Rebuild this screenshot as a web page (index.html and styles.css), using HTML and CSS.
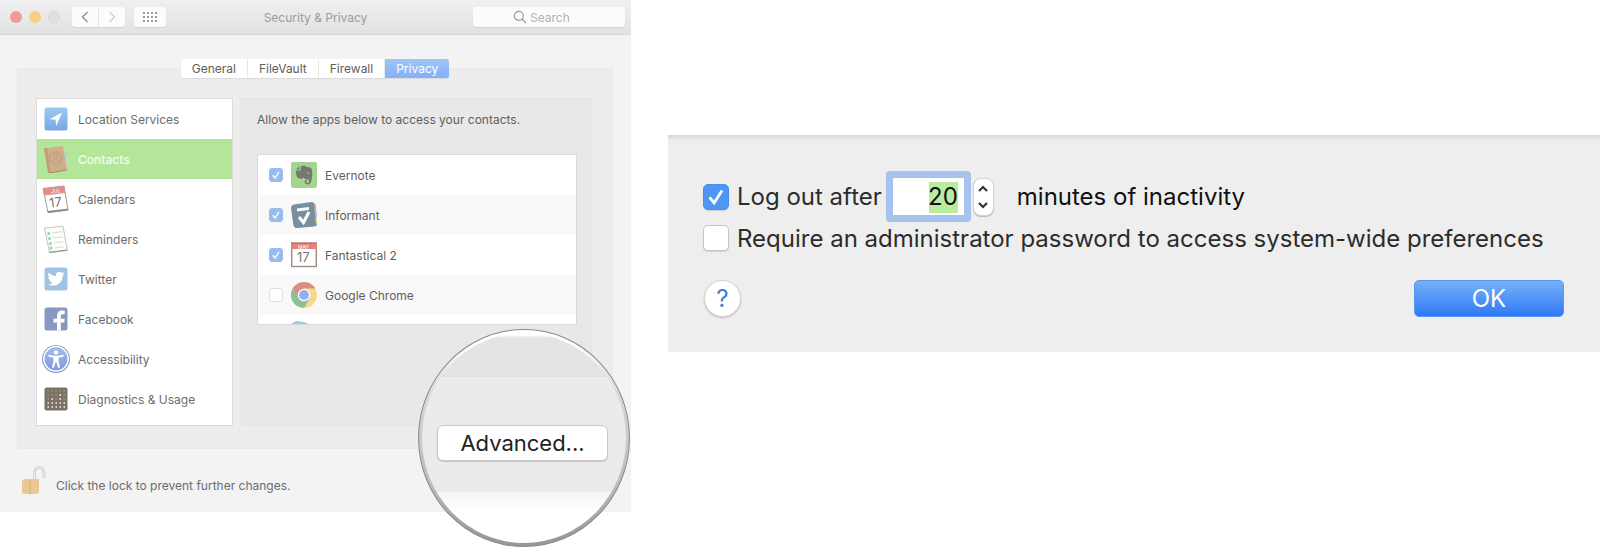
FILE: index.html
```html
<!DOCTYPE html>
<html lang="en">
<head>
<meta charset="utf-8">
<title>Security &amp; Privacy</title>
<link rel="stylesheet" href="styles.css">
</head>
<body>
<main class="stage">
  <section class="window" aria-label="Security &amp; Privacy">
    <header class="titlebar">
      <div class="lights"><span class="light red"></span><span class="light amber"></span><span class="light off"></span></div>
      <div class="nav">
        <button class="tool back" aria-label="Back"><svg width="8" height="12" viewBox="0 0 8 12"><path d="M6.500 1 1.500 6l5 5" fill="none" stroke="#8c8c8c" stroke-width="1.400"/></svg></button>
        <button class="tool forward" aria-label="Forward"><svg width="8" height="12" viewBox="0 0 8 12"><path d="M1.500 1l5 5-5 5" fill="none" stroke="#d0d0d0" stroke-width="1.400"/></svg></button>
      </div>
      <button class="tool all" aria-label="Show all"><svg width="16" height="12" viewBox="0 0 16 12"><path d="M1 2h14M1 6h14M1 10h14" stroke="#999" stroke-width="2" stroke-dasharray="2 2"/></svg></button>
      <h1 class="title">Security &amp; Privacy</h1>
      <label class="search">
        <svg width="14" height="14" viewBox="0 0 14 14" fill="none" stroke="#999" stroke-width="1.200"><circle cx="5.800" cy="5.800" r="4.500"/><path d="M9 9l4 4"/></svg>
        <input class="search-input" type="search" placeholder="Search" aria-label="Search">
      </label>
    </header>

    <div class="body">
      <nav class="tabs" aria-label="Sections">
        <button class="tab">General</button><button class="tab">FileVault</button><button class="tab">Firewall</button><button class="tab active">Privacy</button>
      </nav>
      <div class="group">
        <ul class="services">
          <li><button class="service">
            <svg class="icon" viewBox="0 0 28 28"><defs><linearGradient id="loc" x2="0" y2="1"><stop stop-color="#9cc9ef"/><stop offset="1" stop-color="#7ba8e4"/></linearGradient></defs><rect x="2.500" y="2.500" width="23" height="23" rx="2.500" fill="url(#loc)"/><path d="M20 7.500 7.500 14.300l6 .500.700 6.200z" fill="#fff"/></svg>
            Location Services</button></li>
          <li><button class="service selected">
            <svg class="icon" viewBox="0 0 28 28"><path d="M2 3.500 21 1l4 24-18 3z" fill="#cdaf8b"/><path d="M2 3.500 5 2.800 9 27.500l-3 .5z" fill="#c29e78"/><path d="M22 8l3-.5.7 4-3 .5z" fill="#a9cfe5"/><path d="M23 14l3-.5.6 4-3 .5z" fill="#c2d6b1"/><path d="M7 28l18-3" stroke="#a58767" stroke-width="1.200"/><g fill="none" stroke="#c19c76"><circle cx="13.500" cy="13" r="6"/><circle cx="13.500" cy="11" r="2"/><path d="M9.500 17q4-5 8-.5"/></g></svg>
            Contacts</button></li>
          <li><button class="service">
            <svg class="icon" viewBox="0 0 28 28"><path d="M1 3.500 22 1l4 24-20 2.500z" fill="#fff" stroke="#9b9b9b"/><path d="M1 3.500 22 1l1.300 7L2.300 10.500z" fill="#e58d86"/><path d="M5.500 26 26 23.500l.3 2L6 28z" fill="#8e8e8e"/><text class="tiny" x="9" y="8" transform="rotate(-7 12 6)">JUL</text><text class="date" x="7" y="22" transform="rotate(-7 13 17)">17</text></svg>
            Calendars</button></li>
          <li><button class="service">
            <svg class="icon" viewBox="0 0 28 28"><path d="M2.500 3 21 1.200l4.300 24L7.500 27.500z" fill="#fcfcfa" stroke="#c5c5c5"/><path d="M7.500 27.500l17.800-2.300" stroke="#999" stroke-width="1.300"/><g stroke="#dcdcdc"><path d="M10 8l10-1.200M10.800 13l10-1.200M11.600 18l10-1.200M12.400 23l9-1"/></g><g fill="#9cd3ac"><circle cx="6.700" cy="8.500" r="1.500"/><circle cx="7.500" cy="13.500" r="1.500"/><circle cx="8.300" cy="18.500" r="1.500"/><circle cx="9" cy="23" r="1.500"/></g></svg>
            Reminders</button></li>
          <li><button class="service">
            <svg class="icon" viewBox="0 0 28 28"><rect x="2.500" y="2.500" width="23" height="23" rx="2.500" fill="#9fc3e4"/><path transform="translate(5.500 5.200) scale(.71)" d="M23.950 4.570a10 10 0 0 1-2.820.770 4.950 4.950 0 0 0 2.160-2.720c-.950.550-2 .960-3.120 1.180a4.920 4.920 0 0 0-8.380 4.480C7.690 8.100 4.070 6.130 1.640 3.160a4.920 4.920 0 0 0 1.520 6.570 4.900 4.900 0 0 1-2.230-.610v.060a4.920 4.920 0 0 0 3.950 4.830 5 5 0 0 1-2.210.080 4.940 4.940 0 0 0 4.600 3.420A9.870 9.870 0 0 1 0 19.540a14 14 0 0 0 7.550 2.210c9.050 0 14-7.500 14-13.980l-.020-.630a9.940 9.940 0 0 0 2.420-2.570z" fill="#fff"/></svg>
            Twitter</button></li>
          <li><button class="service">
            <svg class="icon" viewBox="0 0 28 28"><rect x="2.500" y="2.500" width="23" height="23" rx="2.500" fill="#8998c3"/><path d="M15 25.500v-8h-3.500v-3.800H15v-2.500C15 7.400 17 5.500 20 5.500h2.700v3.700h-1.900c-1.600 0-2 .8-2 2v2.500h3.900l-.5 3.800h-3.400v8z" fill="#fff"/></svg>
            Facebook</button></li>
          <li><button class="service">
            <svg class="icon" viewBox="0 0 28 28"><defs><linearGradient id="acc" x2="0" y2="1"><stop stop-color="#a3bfe9"/><stop offset="1" stop-color="#7e98df"/></linearGradient></defs><circle cx="14" cy="14" r="14" fill="#8b9dc8"/><circle cx="14" cy="13.800" r="12.200" fill="url(#acc)" stroke="#fff" stroke-width="1.500"/><circle cx="14" cy="7.500" r="2.200" fill="#fff"/><path d="M6.500 9.800l5.200.9h4.600l5.200-.9.200 1.700-5.200 1.300v3.700l1.600 6-1.900.5L14.300 17h-.6l-1.900 6-1.900-.5 1.600-6v-3.700l-5.200-1.300z" fill="#fff"/></svg>
            Accessibility</button></li>
          <li><button class="service">
            <svg class="icon" viewBox="0 0 28 28"><rect x="2.500" y="2.500" width="23" height="23" rx="2" fill="#7b7265"/><g stroke-width="1.500" stroke-dasharray="1.500 2.500"><path d="M5.500 6h18M5.500 10h18M5.500 14h18" stroke="#9c9485"/><path d="M5.500 18h18M5.500 22h18M17.500 10h2M9.500 14h2M17.500 14h2" stroke="#f4efe3"/></g></svg>
            Diagnostics &amp; Usage</button></li>
        </ul>

        <div class="pane">
          <p class="hint">Allow the apps below to access your contacts.</p>
          <ul class="apps">
            <li><label class="app"><input class="check small" type="checkbox" checked>
              <svg class="app-icon" viewBox="0 0 26 26"><rect width="26" height="26" rx="2" fill="#a4d590"/><path d="M10 4.200C12 3.300 15 3.800 16 5c3 0 4.700.6 5 3 .5 3.500.3 8-.6 11-.6 2.300-2 3.500-4 3.400-2 0-3-1.300-2.800-2.800.2-1.300 1.200-2 2.500-1.800v1.400c-.8 0-1.100.4-1 .9.100.6.700.8 1.400.8 1.200 0 1.600-.9 1.500-2-.1-1.300-1-1.700-2.600-1.700-1.500 0-2.200-.6-2.500-1.700-.8 1-2 1.500-3.600 1.300-2.700-.3-4.200-2.500-4.500-6.300-.1-1.200.3-1.900 1.500-1.900h2.200c.8 0 1.200-.4 1.200-1.200z" fill="#76796f"/><path d="M5 7.500 8.500 4v3.500z" fill="#76796f"/><path d="M16 11q2-.6 2.500 1" stroke="#a4d590" fill="none"/></svg>
              Evernote</label></li>
            <li><label class="app"><input class="check small" type="checkbox" checked>
              <svg class="app-icon" viewBox="0 0 26 26"><path d="M3 2.500 20 0q3-.3 3.500 2.500L26 22q0 2-2.500 2.500L6 26q-3 .2-3.500-2.500L0 6q-.2-3 3-3.500z" fill="#76909f"/><path d="M23 1l1.600 1 .8 6-2 .4z" fill="#dc9b9b"/><path d="M23.500 9l2-.4.800 6-2 .4z" fill="#b5b9d6"/><path d="M24.200 16l2-.4.400 6-1.600.4z" fill="#e5d48e"/><path d="M6 6.500 18 5v3L6 9.500z" fill="#fff"/><path d="M8 15l4.500 5.500L18 10" fill="none" stroke="#fff" stroke-width="3"/></svg>
              Informant</label></li>
            <li><label class="app"><input class="check small" type="checkbox" checked>
              <svg class="app-icon" viewBox="0 0 26 26"><rect x=".700" y="1" width="24.600" height="23.500" fill="#fff" stroke="#9f8b83" stroke-width="1.400"/><path d="M0 .5h26V7H0z" fill="#df857d"/><path d="M1 1.500h24" stroke="#b76e68" stroke-dasharray="2 1"/><text class="tiny" x="7" y="6.500">MAY</text><text class="date" x="6" y="20">17</text></svg>
              Fantastical 2</label></li>
            <li><label class="app"><input class="check small" type="checkbox">
              <svg class="app-icon" viewBox="0 0 26 26"><circle cx="13" cy="13" r="13" fill="#f4d98d"/><path d="M1.740 6.500A13 13 0 0 1 24.260 6.500H13L7.400 16.200z" fill="#db8d84"/><path d="M1.740 6.500A13 13 0 0 0 13 26l5.600-9.700L13 13 7.400 16.200z" fill="#8cc197"/><circle cx="13" cy="13" r="6.200" fill="#fff"/><circle cx="13" cy="13" r="4.900" fill="#8eaeef"/></svg>
              Google Chrome</label></li>
            <li class="peek"><svg class="app-icon" viewBox="0 0 26 26"><path d="M0 4 5 1l8 1 7 3 2 8H2z" fill="#99cbe3"/></svg></li>
          </ul>
        </div>
      </div>

      <footer class="lockbar">
        <svg width="24" height="30" viewBox="0 0 24 30"><path d="M12.500 14V8q0-6 4.500-6.500T22 7v5" fill="none" stroke="#c3cad0" stroke-width="2.600"/><path d="M12.500 14V8q0-6 4.500-6.500T22 7v5" fill="none" stroke="#f2f4f5" stroke-width="1"/><path d="M0 14.500 2 13h15v14.500q-8 1.500-17 0z" fill="#ebca98"/><path d="M8 14v14" stroke="#d0a76c"/><path d="M0 17.500h17M0 21h17M0 24.500h17" stroke="#e0ba82" stroke-width=".5"/></svg>
        <span>Click the lock to prevent further changes.</span>
      </footer>
    </div>

    <div class="lens"><div class="glass"><button class="advanced">Advanced...</button></div></div>
  </section>

  <section class="dialog" aria-label="Advanced options">
    <div class="line first">
      <label class="option"><input class="check large" type="checkbox" checked>Log out after</label>
      <div class="number"><input class="minutes" type="text" value="20" aria-label="Minutes"></div>
      <button class="stepper" aria-label="Change minutes"><svg width="12" height="26" viewBox="0 0 12 26"><path d="M2 7l4-4 4 4M2 19l4 4 4-4" fill="none" stroke="#333" stroke-width="2.200"/></svg></button>
      <span class="unit">minutes of inactivity</span>
    </div>
    <div class="line">
      <label class="option"><input class="check large" type="checkbox">Require an administrator password to access system-wide preferences</label>
    </div>
    <div class="actions">
      <button class="help" aria-label="Help">?</button>
      <button class="ok">OK</button>
    </div>
  </section>
</main>
</body>
</html>
```
FILE: styles.css
```css
* { box-sizing: border-box; }
body { margin: 0; background: #fff; font-family: Inter, "Liberation Sans", sans-serif; font-size: 12px; color: #6c6c6c; }
button, input { font: inherit; color: inherit; margin: 0; }
button { border: 0; padding: 0; background: none; }
ul { list-style: none; margin: 0; padding: 0; }
svg { display: block; flex: none; }

.stage { display: grid; grid-template-columns: 631fr 932fr; gap: 37px; align-items: start; padding-bottom: 36px; }

.window { position: relative; background: #f3f3f3; }
.titlebar { height: 35px; display: flex; align-items: center; padding: 0 6px 0 10px; background: linear-gradient(#f0f0f0, #e2e2e4); border-bottom: 1px solid #d6d6d8; }
.lights { display: flex; gap: 7px; }
.light { width: 12px; height: 12px; border-radius: 50%; }
.red { background: #f09a97; }
.amber { background: #f8cf85; }
.off { background: #e0e0e0; border: 1px solid #d8d8d8; }
.nav { display: flex; gap: 1px; margin: 0 9px 0 12px; }
.tool { width: 26px; height: 20px; display: grid; place-items: center; background: #fcfcfc; border-radius: 3px; box-shadow: 0 1px 1px #d2d2d2; }
.back { border-radius: 3px 0 0 3px; }
.forward { border-radius: 0 3px 3px 0; }
.all { width: 32px; }
.title { flex: 1; margin: 0; padding-right: 8px; text-align: center; font-size: 12px; font-weight: 400; color: #9c9c9c; }
.search { width: 152px; height: 20px; display: flex; align-items: center; gap: 3px; padding-left: 40px; background: #fcfcfc; border-radius: 3px; box-shadow: 0 1px 1px #d2d2d2; }
.search-input { width: 70px; border: 0; padding: 0; background: none; outline: 0; }
.search-input::placeholder { color: #b2b2b2; opacity: 1; }

.body { padding: 24px 18px 12px 17px; }
.tabs { position: relative; display: flex; justify-content: center; }
.tab { height: 19px; padding: 0 11px; background: #fff; border-right: 1px solid #ececec; color: #5d5d5d; box-shadow: 0 1px 1px #dadada; }
.tab:first-child { border-radius: 3px 0 0 3px; }
.tab.active { border: 0; border-radius: 0 3px 3px 0; background: linear-gradient(#9fc6f7, #84b0f7); color: #fff; }
.group { margin-top: -10px; padding: 29px 20px 22px 18px; display: grid; grid-template-columns: 197fr 351fr; gap: 8px; background: #ededed; border: 1px solid #e9e9e9; }

.services { background: #fff; border: 1px solid #dcdcdc; padding-bottom: 6px; }
.service { width: 100%; height: 40px; display: flex; align-items: center; gap: 8px; padding-left: 5px; text-align: left; }
.selected { background: #b4e69a; color: #f5fbef; font-weight: 500; }
.icon { width: 28px; height: 28px; }
.tiny { font-size: 5px; fill: #fff; }
.date { font-size: 13px; fill: #777; }

.pane { background: #e8e8e8; border: 1px solid #e4e4e4; padding: 12px 14px 0 15px; }
.hint { margin: 0 0 26px; line-height: 17px; color: #5f5f5f; }
.apps { height: 171px; overflow: hidden; background: #fff; border: 1px solid #dadada; }
.apps li:nth-child(even) { background: #f9f9f9; }
.app { height: 40px; display: flex; align-items: center; padding-left: 11px; gap: 8px; color: #5f5f5f; }
.app-icon { width: 26px; height: 26px; }
.peek { padding: 5px 0 0 33px; }

.check { appearance: none; flex: none; background: #fff center / 100% 100% no-repeat; border: 1px solid #c6c6c6; }
.small { width: 14px; height: 14px; border-radius: 3px; border-color: #dfdfdf; }
.small:checked { background-color: #97bced; border-color: #97bced; }
.large { width: 26px; height: 26px; border-radius: 5px; box-shadow: 0 1px 1px #d0d0d0; }
.large:checked { background-color: #4e97f4; border-color: #478eea; }
.check:checked { background-image: url("data:image/svg+xml,%3Csvg xmlns='http://www.w3.org/2000/svg' viewBox='0 0 26 26'%3E%3Cpath d='M6 13.500l5 6L19.500 6' fill='none' stroke='white' stroke-width='3'/%3E%3C/svg%3E"); }

.lockbar { height: 51px; display: flex; align-items: center; gap: 10px; padding: 22px 0 0 5px; }
.lockbar svg { margin-top: -10px; }

.lens { position: absolute; left: 418px; top: 329px; width: 212px; height: 218px; border-radius: 50%; border: 1px solid #8a8a8a; padding: 3px; background: linear-gradient(#fff 5%, #d8d8d8 30%, #bdbdbd 70%, #969696); }
.glass { height: 100%; border-radius: 50%; padding: 92px 18px 0 15px; background: linear-gradient(#fff 2px, #e4e4e4 5px 43px, #dedede 43px 44px, #ebebeb 44px 159px, #f7f7f7 159px 163px, #fff 180px); }
.advanced { width: 100%; height: 36px; background: #fff; border: 1px solid #c8c8c8; border-radius: 6px; box-shadow: 0 1px 1px #c4c4c4; font-size: 22px; color: #222; }

.dialog { margin-top: 135px; padding: 36px 36px 35px 35px; background: #eee; box-shadow: inset 0 5px 4px -3px #d2d2d2; font-size: 24px; color: #2c2c2c; }
.line { display: flex; align-items: center; height: 32px; white-space: nowrap; }
.first { height: 51px; }
.option { display: flex; align-items: center; gap: 8px; }
.number { margin: 0 2px 0 4px; padding: 7px; border-radius: 4px; background: #a5c3ec; }
.minutes { display: block; width: 71px; height: 37px; border: 0; outline: 0; padding: 0 6px 0 30px; text-align: right; color: #111; background: linear-gradient(#b9eba0, #b9eba0) 36px 4px / 29px 31px no-repeat #fff; }
.stepper { width: 21px; height: 38px; display: grid; place-items: center; border-radius: 8px; background: #fff; border: 1px solid #d3d3d3; box-shadow: 0 1px 1px #bbb; }
.unit { margin-left: 23px; color: #111; }
.actions { display: flex; justify-content: space-between; align-items: center; margin-top: 26px; }
.help { width: 37px; height: 37px; margin-left: 1px; border-radius: 50%; background: #fff; border: 1px solid #d4d4d4; box-shadow: 0 1px 2px #bbb; color: #3f7fd4; font-size: 24px; }
.ok { width: 150px; height: 37px; border-radius: 5px; border: 1px solid #5a95ef; background: linear-gradient(#76b0f7, #2f79f6); color: #fff; }
```
